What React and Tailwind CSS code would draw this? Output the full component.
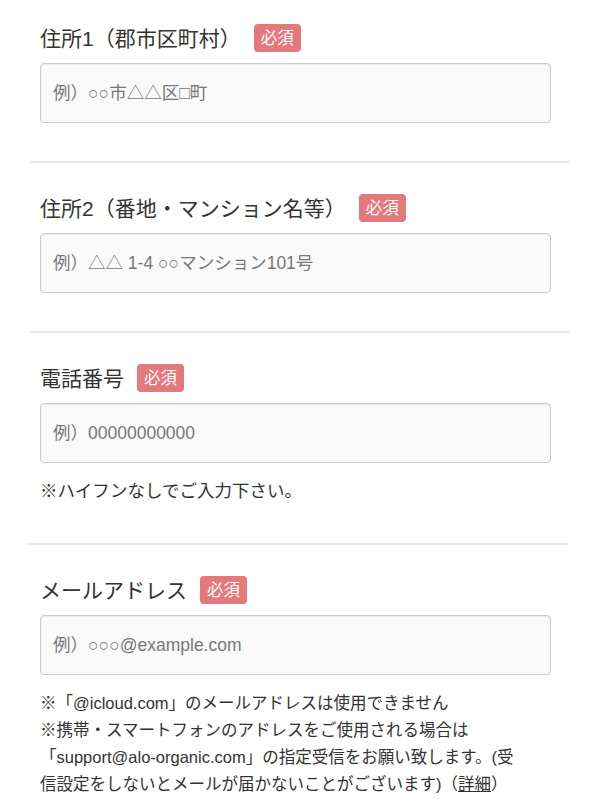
const FONT = "font-['Liberation_Sans','Noto_Sans_CJK_JP',sans-serif]"

function Badge() {
  return (
    <span className="ml-[13px] inline-flex h-[28px] items-center rounded-[4px] bg-[#e4787b] px-[7px] text-[16.5px] text-white">
      必須
    </span>
  )
}

function Field({ label, placeholder, first, last, children }) {
  return (
    <section
      className={
        (first ? 'pt-[24px] ' : 'pt-[31px] ') +
        (last ? 'pb-[10px] ' : 'pb-[38px] border-b-2 border-[#e8e8e8] ') +
        'pl-[11px] pr-[18px]'
      }
    >
      <div className="flex h-[28px] items-center">
        <span className="text-[21px] leading-none text-[#333]">{label}</span>
        <Badge />
      </div>
      <input
        type="text"
        placeholder={placeholder}
        className="mt-[11px] block h-[60px] w-full rounded-[4px] border border-[#cccccc] bg-[#fafafa] px-[12px] text-[17.5px] text-[#333] shadow-[inset_0_1px_2px_rgba(0,0,0,0.07)] outline-none placeholder:text-[#777]"
      />
      {children}
    </section>
  )
}

export default function App() {
  return (
    <div className={`${FONT} min-h-[810px] bg-white px-[29px]`}>
      <Field first label="住所1（郡市区町村）" placeholder="例）○○市△△区□町" />
      <Field label="住所2（番地・マンション名等）" placeholder="例）△△ 1-4 ○○マンション101号" />
      <Field label="電話番号" placeholder="例）00000000000">
        <p className="mt-[15px] text-[17.5px] leading-[27px] text-[#333]">※ハイフンなしでご入力下さい。</p>
      </Field>
      <Field last label="メールアドレス" placeholder="例）○○○@example.com">
        <div className="mt-[15px] text-[16.5px] leading-[27px] text-[#333]">
          <p>※「@icloud.com」のメールアドレスは使用できません</p>
          <p>
            ※携帯・スマートフォンのアドレスをご使用される場合は
            <br />
            「support@alo-organic.com」の指定受信をお願い致します。(受
            <br />
            信設定をしないとメールが届かないことがございます)（<a href="#" className="underline">詳細</a>）
          </p>
        </div>
      </Field>
    </div>
  )
}
